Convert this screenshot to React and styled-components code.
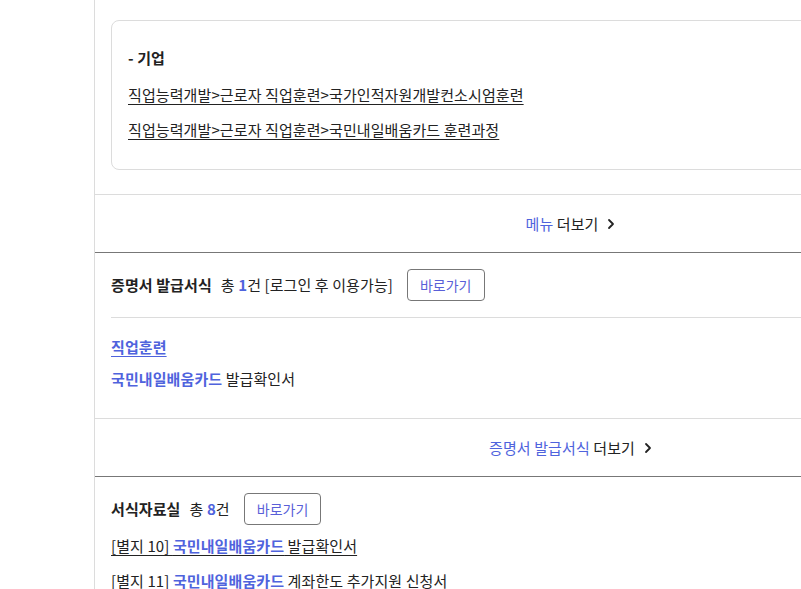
import React from "react";
import styled, { createGlobalStyle } from "styled-components";

const Global = createGlobalStyle`
  html, body { margin: 0; padding: 0; background: #fff; overflow: hidden; }
  body {
    font-family: "Noto Sans CJK KR", "Noto Sans", sans-serif;
    font-size: 15px;
    color: #222;
    letter-spacing: 0.1px;
  }
  * { box-sizing: border-box; }
`;

const BLUE = "#4f63dd";

const Page = styled.div`
  display: flex;
  width: 1100px;
`;

const Gutter = styled.div`
  width: 94px;
  flex: none;
`;

const Panel = styled.main`
  width: 955px;
  flex: none;
  border-left: 1px solid #dcdcdc;
  display: flex;
  flex-direction: column;
`;

const CardWrap = styled.div`
  padding: 20px 0 24px 16px;
  border-bottom: 1px solid #dcdcdc;
`;

const Card = styled.div`
  border: 1px solid #dcdcdc;
  border-radius: 8px;
  padding: 26px 16px 28px;
  display: flex;
  flex-direction: column;
  gap: 13px;
`;

const CardTitle = styled.div`
  font-weight: 700;
  line-height: 22px;
  margin-bottom: 2px;
`;

const PathLink = styled.a`
  line-height: 22px;
  color: #222;
  text-decoration: underline;
  text-underline-offset: 3px;
  align-self: flex-start;
  cursor: pointer;
`;

const MoreRow = styled.div`
  height: 58px;
  display: flex;
  align-items: center;
  justify-content: center;
  gap: 4px;
  border-bottom: 1px solid #777;
  line-height: 22px;
`;

const Blue = styled.span`
  color: ${BLUE};
  font-weight: ${(p) => (p.$bold ? 700 : 400)};
`;

const Chevron = () => (
  <svg width="14" height="14" viewBox="0 0 14 14" style={{ marginLeft: 2 }}>
    <polyline points="5,3 9,7 5,11" fill="none" stroke="#222" strokeWidth="1.8" strokeLinecap="round" strokeLinejoin="round" />
  </svg>
);

const Section = styled.section`
  padding: 16px 0 0 16px;
  border-bottom: ${(p) => (p.$noBorder ? "none" : "1px solid #dcdcdc")};
`;

const Header = styled.div`
  display: flex;
  align-items: center;
  padding-bottom: ${(p) => p.$pb || 0}px;
  border-bottom: ${(p) => (p.$line ? "1px solid #dcdcdc" : "none")};
`;

const Title = styled.h3`
  margin: 0;
  font-size: 15px;
  font-weight: 700;
  line-height: 22px;
`;

const Count = styled.span`
  margin-left: 9px;
  line-height: 22px;
`;

const GoButton = styled.button`
  margin-left: 14px;
  height: 32px;
  padding: 0 12px;
  border: 1px solid #777;
  border-radius: 4px;
  background: #fff;
  color: #5a5fd8;
  font-family: inherit;
  font-size: 14px;
  letter-spacing: 0;
  cursor: pointer;
`;

const List = styled.div`
  display: flex;
  flex-direction: column;
  gap: ${(p) => p.$gap}px;
  padding: ${(p) => p.$pt}px 0 ${(p) => p.$pb}px;
`;

const Item = styled.div`
  line-height: 22px;
`;

const ItemLink = styled.a`
  line-height: 22px;
  color: ${(p) => (p.$blue ? BLUE : "#222")};
  font-weight: ${(p) => (p.$blue ? 700 : 400)};
  text-decoration: underline;
  text-underline-offset: 3px;
  align-self: flex-start;
  cursor: pointer;
`;

export default function App() {
  return (
    <>
      <Global />
      <Page>
        <Gutter />
        <Panel>
          <CardWrap>
            <Card>
              <CardTitle>- 기업</CardTitle>
              <PathLink>직업능력개발&gt;근로자 직업훈련&gt;국가인적자원개발컨소시엄훈련</PathLink>
              <PathLink>직업능력개발&gt;근로자 직업훈련&gt;국민내일배움카드 훈련과정</PathLink>
            </Card>
          </CardWrap>
          <MoreRow>
            <span>
              <Blue>메뉴</Blue> 더보기
            </span>
            <Chevron />
          </MoreRow>

          <Section>
            <Header $line $pb={16}>
              <Title>증명서 발급서식</Title>
              <Count>
                총 <Blue $bold>1</Blue>건 [로그인 후 이용가능]
              </Count>
              <GoButton>바로가기</GoButton>
            </Header>
            <List $gap={10} $pt={18} $pb={28}>
              <ItemLink $blue>직업훈련</ItemLink>
              <Item>
                <Blue $bold>국민내일배움카드</Blue> 발급확인서
              </Item>
            </List>
          </Section>
          <MoreRow>
            <span>
              <Blue>증명서 발급서식</Blue> 더보기
            </span>
            <Chevron />
          </MoreRow>

          <Section $noBorder>
            <Header>
              <Title>서식자료실</Title>
              <Count>
                총 <Blue $bold>8</Blue>건
              </Count>
              <GoButton>바로가기</GoButton>
            </Header>
            <List $gap={13} $pt={10} $pb={20}>
              <ItemLink>
                [별지 10] <Blue $bold>국민내일배움카드</Blue> 발급확인서
              </ItemLink>
              <ItemLink>
                [별지 11] <Blue $bold>국민내일배움카드</Blue> 계좌한도 추가지원 신청서
              </ItemLink>
            </List>
          </Section>
        </Panel>
      </Page>
    </>
  );
}
